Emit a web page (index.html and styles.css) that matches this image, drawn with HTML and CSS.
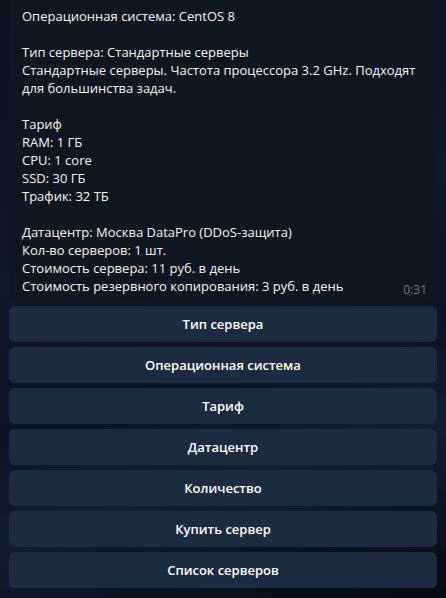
FILE: index.html
```html
<!DOCTYPE html>
<html lang="ru">
<head>
    <meta charset="UTF-8">
    <meta name="viewport" content="width=device-width, initial-scale=1.0">
    <title>Заказ сервера</title>
    <link rel="stylesheet" href="styles.css">
</head>
<body>

    <div class="chat">
        <!-- сообщение бота -->
        <div class="bubble">
            <p>Операционная система: CentOS 8</p>
            <p>Тип сервера: Стандартные серверы<br>Стандартные серверы. Частота процессора 3.2 GHz. Подходят для большинства задач.</p>
            <p>Тариф<br>RAM: 1 ГБ<br>CPU: 1 core<br>SSD: 30 ГБ<br>Трафик: 32 ТБ</p>
            <p>Датацентр: Москва DataPro (DDoS-защита)<br>Кол-во серверов: 1 шт.<br>Стоимость сервера: 11 руб. в день<br>Стоимость резервного копирования: 3 руб. в день<span class="time">0:31</span></p>
        </div>

        <!-- инлайн-клавиатура -->
        <div class="keyboard">
            <button>Тип сервера</button>
            <button>Операционная система</button>
            <button>Тариф</button>
            <button>Датацентр</button>
            <button>Количество</button>
            <button>Купить сервер</button>
            <button>Список серверов</button>
        </div>
    </div>

</body>
</html>
```

FILE: styles.css
```css
body {
    margin: 0;
    padding: 0;
    height: 598px;
    overflow: hidden;
    font-family: "Open Sans", "Noto Sans", sans-serif;
    color: #f5f5f5;
    background: linear-gradient(165deg, #0a1220 0%, #0d1829 40%, #0b1424 62%, #111e31 75%, #060a12 100%);
}

.chat {
    padding: 0 9px;
    display: flex;
    flex-direction: column;
}

.bubble {
    margin: -3px 1px 0 1px;
    padding: 10px 12px 3px 12px;
    background: #0e1621;
    border-radius: 0 0 10px 10px;
    font-size: 13px;
    line-height: 18px;
}

.bubble p {
    margin: 0 0 18px 0;
}

.bubble p:last-child {
    margin-bottom: 0;
}

.time {
    float: right;
    color: #6d7f8f;
    font-size: 12px;
    line-height: 14px;
    margin-top: 6px;
    margin-right: -3px;
}

.keyboard {
    display: flex;
    flex-direction: column;
    gap: 5px;
    margin-top: 6px;
}

button {
    height: 36px;
    border: none;
    border-radius: 6px;
    background: #1c2c40;
    color: #ffffff;
    font-family: "Open Sans", "Noto Sans", sans-serif;
    font-size: 13px;
    font-weight: 600;
    cursor: pointer;
}
```
